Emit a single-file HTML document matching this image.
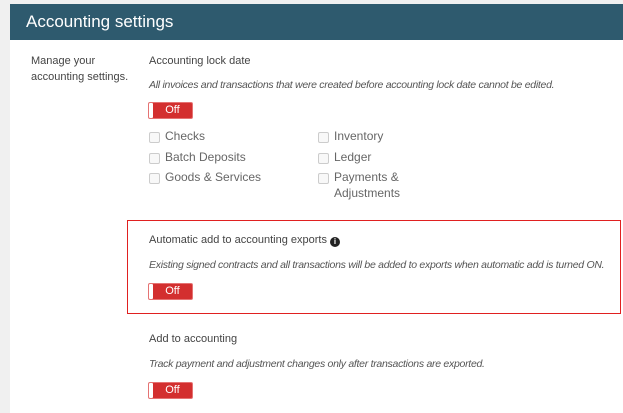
<!DOCTYPE html>
<html><head><style>
body{margin:0;width:623px;height:413px;background:#f0f0f0;font-family:"Liberation Sans",sans-serif;color:#444;overflow:hidden;position:relative}
.panel{position:absolute;left:10px;top:4px;width:613px;height:409px;background:#fff}
.hdr{position:absolute;left:10px;top:4px;width:613px;height:36px;background:#2e5a6e;color:#fff;font-size:17px;line-height:36px;padding-left:16px;box-sizing:border-box}
.t{position:absolute;font-size:11px;white-space:nowrap}
.i{position:absolute;font-size:10.5px;letter-spacing:-0.28px;font-style:italic;white-space:nowrap;color:#555}
.tg{position:absolute;width:45px;height:17px;background:#d32f2f;border:1px solid #e57373;border-radius:2px;box-sizing:border-box;color:#fff;font-size:11px;line-height:15px;text-align:center;padding-left:4px}
.tg:before{content:"";position:absolute;left:0;top:0;width:4px;height:15px;background:#fff;border-radius:1px}
.cb{position:absolute;width:9px;height:9px;border:1px solid #ccc;border-radius:2px;background:#f8f8f8}
.cl{position:absolute;font-size:12px;color:#666;white-space:nowrap}
.box{position:absolute;left:127px;top:220px;width:494px;height:94px;border:1.5px solid #e02020;box-sizing:border-box}
</style></head><body>
<div class="panel"></div>
<div class="hdr">Accounting settings</div>
<div class="t" style="left:31px;top:55px">Manage your</div>
<div class="t" style="left:31px;top:71px">accounting settings.</div>
<div class="t" style="left:149px;top:55px">Accounting lock date</div>
<div class="i" style="left:149px;top:79px">All invoices and transactions that were created before accounting lock date cannot be edited.</div>
<div class="tg" style="left:148px;top:102px">Off</div>
<div class="cb" style="left:149px;top:132px"></div><div class="cl" style="left:165px;top:129px">Checks</div>
<div class="cb" style="left:149px;top:153px"></div><div class="cl" style="left:165px;top:150px">Batch Deposits</div>
<div class="cb" style="left:149px;top:173px"></div><div class="cl" style="left:165px;top:170px">Goods &amp; Services</div>
<div class="cb" style="left:318px;top:132px"></div><div class="cl" style="left:334px;top:129px">Inventory</div>
<div class="cb" style="left:318px;top:153px"></div><div class="cl" style="left:334px;top:150px">Ledger</div>
<div class="cb" style="left:318px;top:173px"></div><div class="cl" style="left:334px;top:170px">Payments &amp;</div>
<div class="cl" style="left:334px;top:186px">Adjustments</div>
<div class="box"></div>
<div class="t" style="left:149px;top:234px">Automatic add to accounting exports <span style="display:inline-block;width:10px;height:10px;border-radius:50%;background:#222;color:#fff;font-size:8px;line-height:10px;text-align:center;font-weight:bold;vertical-align:-1px">i</span></div>
<div class="i" style="left:149px;top:259px">Existing signed contracts and all transactions will be added to exports when automatic add is turned ON.</div>
<div class="tg" style="left:148px;top:283px">Off</div>
<div class="t" style="left:149px;top:333px">Add to accounting</div>
<div class="i" style="left:149px;top:358px">Track payment and adjustment changes only after transactions are exported.</div>
<div class="tg" style="left:148px;top:382px">Off</div>
</body></html>
